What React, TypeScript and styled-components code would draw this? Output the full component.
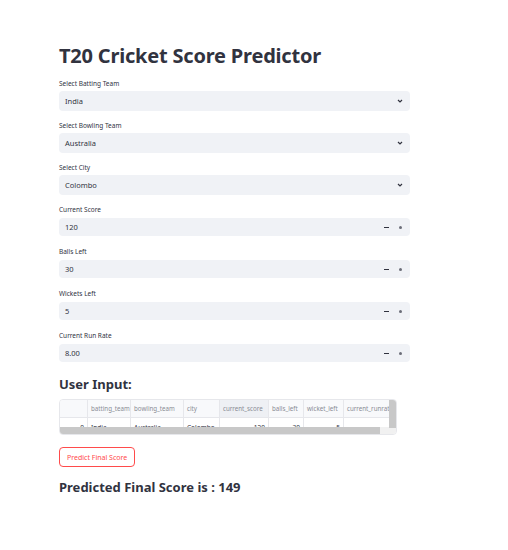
import React from "react";
import styled, { createGlobalStyle } from "styled-components";

const Global = createGlobalStyle`
  html, body { margin: 0; padding: 0; background: #fff; }
  body { font-family: "Noto Sans", "Liberation Sans", sans-serif; color: #31333f; }
`;

const Page = styled.div`
  width: 508px;
  min-height: 550px;
  box-sizing: border-box;
  padding: 42px 98px 0 59px;
  display: flex;
  flex-direction: column;
`;

const Title = styled.h1`
  margin: 0 0 8px;
  font-size: 20px;
  line-height: 28px;
  font-weight: 700;
  letter-spacing: -0.2px;
  color: #31333f;
`;

const Field = styled.div<{ $gap: number }>`
  display: flex;
  flex-direction: column;
  margin-bottom: ${(p) => p.$gap}px;
`;

const Label = styled.label<{ $h: number }>`
  font-size: 6.5px;
  line-height: 12px;
  height: ${(p) => p.$h}px;
  color: #31333f;
`;

const Box = styled.div<{ $h: number }>`
  height: ${(p) => p.$h}px;
  background: #f0f2f6;
  border-radius: 4px;
  display: flex;
  align-items: center;
  padding: 0 7px 0 6px;
  font-size: 7.5px;
  color: #31333f;
`;

const Value = styled.span`
  flex: 1;
`;

const Chevron = () => (
  <svg width="6" height="4" viewBox="0 0 6 4">
    <path d="M1 1 L3 3 L5 1" stroke="#31333f" strokeWidth="1.2" fill="none" />
  </svg>
);

const Steps = styled.div`
  display: flex;
  align-items: center;
  gap: 10px;
`;

const Minus = styled.span`
  width: 5px;
  height: 1px;
  background: #31333f;
`;

const Plus = styled.span`
  width: 3px;
  height: 3px;
  border-radius: 50%;
  background: #6b6d78;
  margin-right: 1px;
`;

const Heading = styled.h3`
  margin: 3px 0 6px;
  font-size: 13px;
  line-height: 18px;
  font-weight: 700;
  color: #31333f;
`;

const TableWrap = styled.div`
  width: 338px;
  height: 36px;
  border: 1px solid #e6e7eb;
  border-radius: 4px;
  overflow: hidden;
  position: relative;
  box-sizing: border-box;
`;

const Grid = styled.div`
  display: grid;
  grid-template-columns: 28px 43px 53px 36px 49px 35px 40px 60px;
  font-size: 6.2px;
  color: #8a8c95;
`;

const HeadCell = styled.div<{ $hl?: boolean }>`
  height: 18px;
  display: flex;
  align-items: center;
  padding-left: 3px;
  border-right: 1px solid #e6e7eb;
  border-bottom: 1px solid #e6e7eb;
  background: ${(p) => (p.$hl ? "#eef0f4" : "#f8f9fb")};
  white-space: nowrap;
  overflow: hidden;
  box-sizing: border-box;
`;

const Cell = styled.div<{ $right?: boolean }>`
  height: 10px;
  display: flex;
  align-items: flex-start;
  justify-content: ${(p) => (p.$right ? "flex-end" : "flex-start")};
  padding: 6px 3px 0;
  color: #31333f;
  border-right: 1px solid #e6e7eb;
  white-space: nowrap;
  overflow: hidden;
  box-sizing: border-box;
  font-size: 6.5px;
  line-height: 8px;
`;

const VScroll = styled.div`
  position: absolute;
  right: 0;
  top: 0;
  width: 7px;
  height: 28px;
  background: #c8c8c8;
`;

const HScroll = styled.div`
  position: absolute;
  left: 0;
  bottom: 0;
  width: 320px;
  height: 7px;
  background: #c8c8c8;
`;

const HTrack = styled.div`
  position: absolute;
  left: 0;
  right: 0;
  bottom: 0;
  height: 7px;
  background: #f1f1f1;
`;

const Button = styled.button`
  align-self: flex-start;
  margin-top: 12px;
  height: 20px;
  padding: 0 7px;
  border: 1px solid #ff4b4b;
  border-radius: 4px;
  background: #fff;
  color: #ff4b4b;
  font-family: inherit;
  font-size: 7px;
`;

const Result = styled.h3`
  margin: 11px 0 0;
  font-size: 13px;
  line-height: 18px;
  font-weight: 700;
  color: #31333f;
`;

const selects = [
  ["Select Batting Team", "India"],
  ["Select Bowling Team", "Australia"],
  ["Select City", "Colombo"],
];
const numbers = [
  ["Current Score", "120"],
  ["Balls Left", "30"],
  ["Wickets Left", "5"],
  ["Current Run Rate", "8.00"],
];

const headers = ["", "batting_team", "bowling_team", "city", "current_score", "balls_left", "wicket_left", "current_runrat"];
const row: [string, boolean][] = [
  ["0", true],
  ["India", false],
  ["Australia", false],
  ["Colombo", false],
  ["120", true],
  ["30", true],
  ["5", true],
  ["", false],
];

export default function App() {
  return (
    <>
      <Global />
      <Page>
        <Title>T20 Cricket Score Predictor</Title>
        {selects.map(([l, v]) => (
          <Field key={l} $gap={9}>
            <Label $h={13}>{l}</Label>
            <Box $h={20}>
              <Value>{v}</Value>
              <Chevron />
            </Box>
          </Field>
        ))}
        {numbers.map(([l, v]) => (
          <Field key={l} $gap={10}>
            <Label $h={14}>{l}</Label>
            <Box $h={18}>
              <Value>{v}</Value>
              <Steps>
                <Minus />
                <Plus />
              </Steps>
            </Box>
          </Field>
        ))}
        <Heading>User Input:</Heading>
        <TableWrap>
          <Grid>
            {headers.map((h, i) => (
              <HeadCell key={i} $hl={i === 4}>{h}</HeadCell>
            ))}
            {row.map(([v, r], i) => (
              <Cell key={i} $right={r}>{v}</Cell>
            ))}
          </Grid>
          <HTrack />
          <HScroll />
          <VScroll />
        </TableWrap>
        <Button>Predict Final Score</Button>
        <Result>Predicted Final Score is : 149</Result>
      </Page>
    </>
  );
}
